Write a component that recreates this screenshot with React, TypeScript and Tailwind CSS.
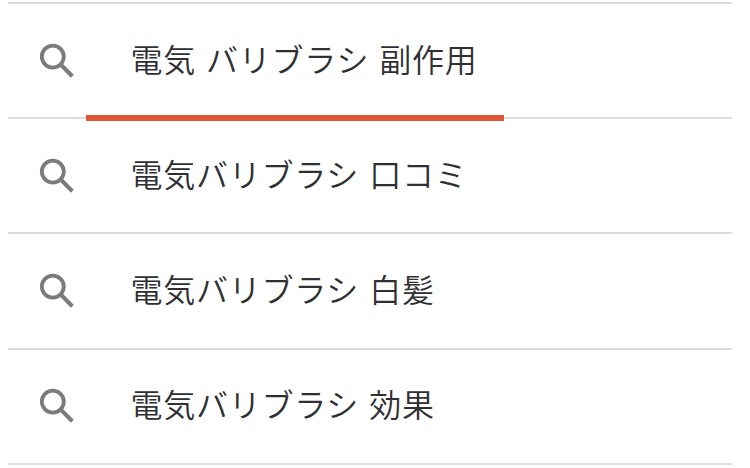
const SUGGESTIONS = [
  { text: "電気 バリブラシ 副作用", underlined: true },
  { text: "電気バリブラシ 口コミ", underlined: false },
  { text: "電気バリブラシ 白髪", underlined: false },
  { text: "電気バリブラシ 効果", underlined: false },
];

function SearchIcon() {
  return (
    <svg viewBox="0 0 36 36" fill="none" stroke="currentColor" className="size-9 shrink-0 text-[#7b7b7b]">
      <circle cx="13.8" cy="13.6" r="11" strokeWidth="3.8" />
      <path d="M21.3 21.3h1.8L33.2 31.8" strokeWidth="1" />
      <path d="M22.6 22.4L33.3 33.3" strokeWidth="4.2" />
    </svg>
  );
}

function SuggestionRow({ text, underlined }: { text: string; underlined: boolean }) {
  return (
    <li className="relative flex h-[115.2px] items-center border-b-2 border-[#dcdcdc] pl-[31px]">
      <SearchIcon />
      <span className="-mt-[6px] ml-[55.5px] whitespace-pre text-[32px] leading-none tracking-[0.75px] [word-spacing:2.2px] text-[#303034]">
        {text}
      </span>
      {underlined && (
        <span className="absolute -bottom-[4px] left-[78px] h-[6px] w-[418px] bg-[#e05534]" />
      )}
    </li>
  );
}

export default function App() {
  return (
    <main
      lang="ja"
      className="h-[468px] w-[750px] overflow-hidden bg-white pt-[2px] pr-[18px] pl-[8px] font-['Noto_Sans_CJK_JP',sans-serif] font-[350]"
    >
      <ul className="border-t-2 border-[#dcdcdc]">
        {SUGGESTIONS.map((item) => (
          <SuggestionRow key={item.text} {...item} />
        ))}
      </ul>
    </main>
  );
}
